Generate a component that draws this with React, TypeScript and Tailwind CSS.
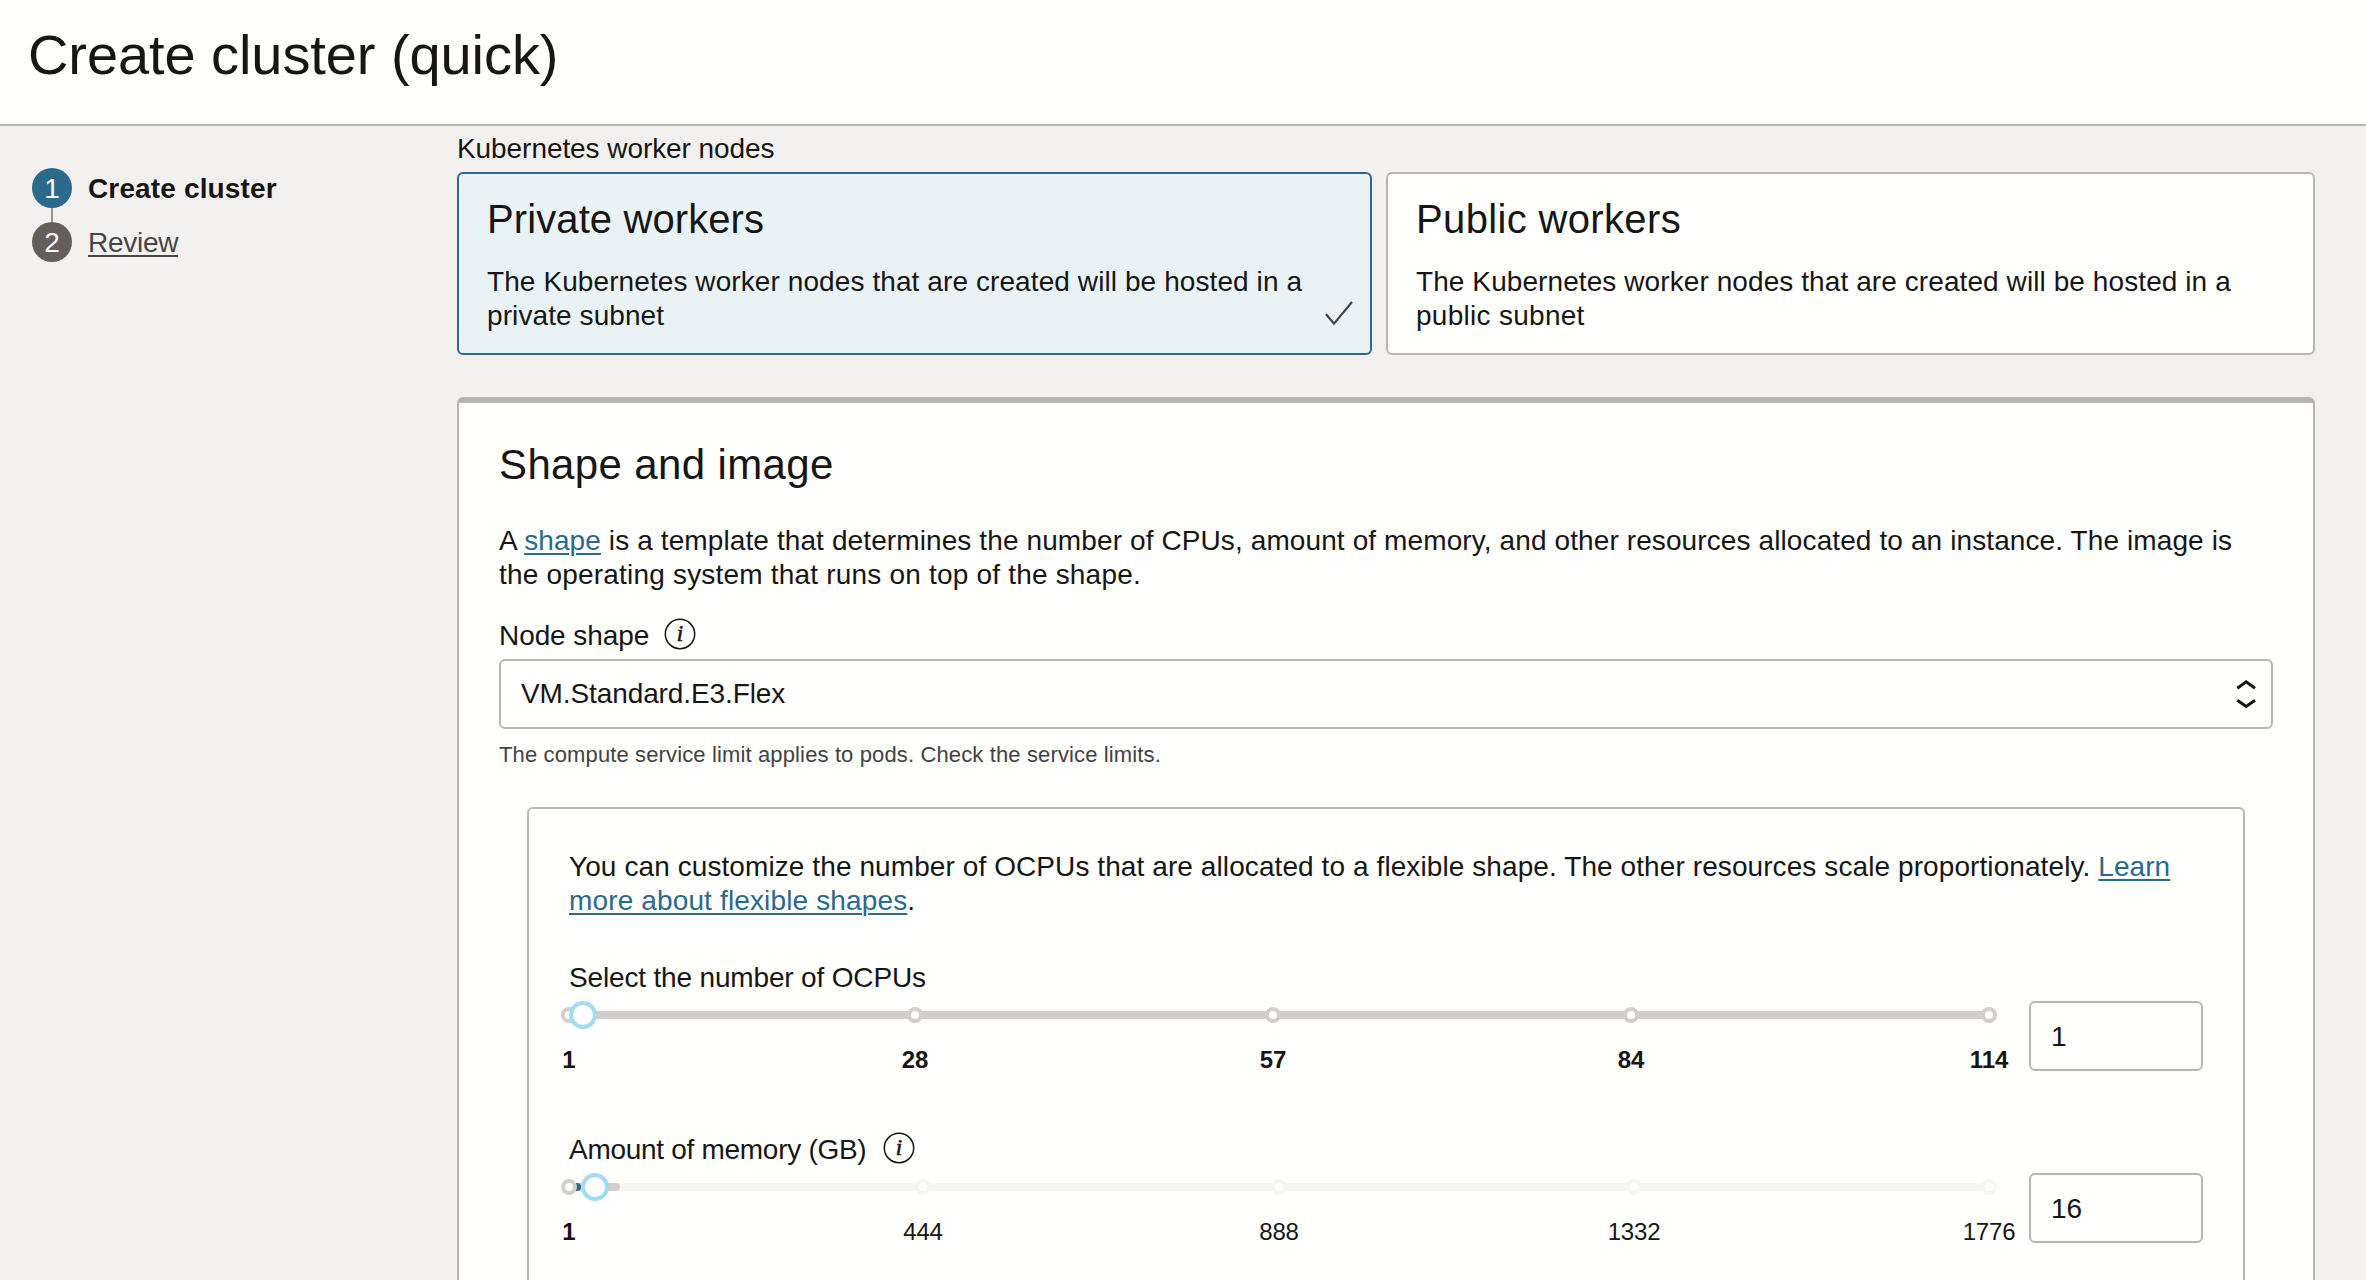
import React from 'react';

type Tick = { at: number; label: string; bold: boolean; muted?: boolean };

type SliderProps = {
  ticks: Tick[];
  thumb: number;
  trackClass: string;
  range?: { available: number; filled: number };
};

const START = 569;
const LENGTH = 1420;
const pct = (x: number) => `${((x - START) / LENGTH) * 100}%`;

const cpuTicks: Tick[] = [
  { at: 569, label: '1', bold: true },
  { at: 915, label: '28', bold: true },
  { at: 1273, label: '57', bold: true },
  { at: 1631, label: '84', bold: true },
  { at: 1989, label: '114', bold: true },
];

const memoryTicks: Tick[] = [
  { at: 569, label: '1', bold: true },
  { at: 923, label: '444', bold: false, muted: true },
  { at: 1279, label: '888', bold: false, muted: true },
  { at: 1634, label: '1332', bold: false, muted: true },
  { at: 1989, label: '1776', bold: false, muted: true },
];

function InfoIcon() {
  return (
    <svg className="-mt-px h-8 w-8 shrink-0" viewBox="0 0 32 32" fill="none">
      <circle cx="16" cy="16" r="14.7" stroke="#171614" strokeWidth="1.5" />
      <text
        x="16"
        y="22.7"
        textAnchor="middle"
        fontFamily='"Liberation Serif", serif'
        fontStyle="italic"
        fontSize="23"
        fill="#171614"
        stroke="#171614"
        strokeWidth="0.6"
      >
        i
      </text>
    </svg>
  );
}

function Slider({ ticks, thumb, trackClass, range }: SliderProps) {
  return (
    <div className="h-[70px] w-[1420px] shrink-0 pt-[10px]">
      <div className={`relative h-2 ${trackClass}`}>
        {range && (
          <>
            <div
              className="absolute inset-y-0 left-0 rounded-r-full bg-[#d2cec9]"
              style={{ width: pct(range.available) }}
            />
            <div
              className="absolute inset-y-0 left-0 rounded-r-full bg-[#2c6a8b]"
              style={{ width: pct(range.filled) }}
            />
          </>
        )}
        {ticks.map((t) => (
          <div
            key={t.label}
            className={`absolute -top-1 h-4 w-4 -translate-x-1/2 rounded-full border-4 bg-[#fefefc] ${
              t.muted ? 'border-[#f7f6f5]' : 'border-[#d2cec9]'
            }`}
            style={{ left: pct(t.at) }}
          />
        ))}
        <div
          className="absolute -top-[10px] h-7 w-7 -translate-x-1/2 rounded-full border-4 border-[#a4daf7] bg-white"
          style={{ left: pct(thumb) }}
        />
      </div>
      <div className="relative mt-[27px] h-7 text-[24px] leading-[28px]">
        {ticks.map((t) => (
          <span
            key={t.label}
            className={`absolute top-0 -translate-x-1/2 ${t.bold ? 'font-bold' : 'tracking-[-0.2px]'}`}
            style={{ left: pct(t.at) }}
          >
            {t.label}
          </span>
        ))}
      </div>
    </div>
  );
}

function NumberBox({ value }: { value: string }) {
  return (
    <div className="ml-[40px] h-[70px] w-[174px] shrink-0 rounded-[6px] border-2 border-[#bbb5b0] pl-5 leading-[68px]">
      {value}
    </div>
  );
}

export default function App() {
  return (
    <div className="flex h-[1280px] w-[2366px] flex-col overflow-hidden whitespace-nowrap bg-[#f3f1f0] font-['Liberation_Sans',Arial,sans-serif] text-[28px] leading-[34px] text-[#171614]">
      <header className="h-[126px] shrink-0 border-b-2 border-[#bbb5b0] bg-[#fefefc] pl-7 pt-[23px]">
        <h1 className="text-[56px] leading-[64px] tracking-[-0.082px]">Create cluster (quick)</h1>
      </header>

      <div className="flex min-h-0 flex-1">
        <nav className="w-[457px] shrink-0 pl-8 pt-[42px] leading-[42px]">
          <div className="flex h-10 gap-4">
            <span className="h-10 w-10 rounded-full bg-[#2c6a8b] text-center text-[#fefefc]">1</span>
            <span className="font-bold tracking-[0.141px]">Create cluster</span>
          </div>
          <div className="ml-[19px] h-[14px] w-0.5 bg-[#97928e]" />
          <div className="flex h-10 gap-4">
            <span className="h-10 w-10 rounded-full bg-[#645f5b] text-center text-[#fefefc]">2</span>
            <a className="tracking-[-0.28px] text-[#474543] underline decoration-2 underline-offset-[3px]">Review</a>
          </div>
        </nav>

        <main className="w-[1858px] shrink-0 pt-[6px]">
          <div className="tracking-[-0.067px]">Kubernetes worker nodes</div>

          <div className="mt-[6px] flex h-[183px] gap-[14px]">
            <section className="relative w-[915px] rounded-[6px] border-2 border-[#2c6a8b] bg-[#e9f2f5] pl-[28px] pt-[23px]">
              <h2 className="text-[40px] leading-[44px] tracking-[0.1px]">Private workers</h2>
              <p className="mt-6 tracking-[0.09px]">
                The Kubernetes worker nodes that are created will be hosted in a<br />
                private subnet
              </p>
              <svg className="absolute bottom-[27px] right-[17px] h-[25px] w-[28px]" viewBox="0 0 28 25" fill="none">
                <path d="M1 13.2 9 22.6 27 1" stroke="#444241" strokeWidth="2.2" />
              </svg>
            </section>
            <section className="flex-1 rounded-[6px] border-2 border-[#bbb5b0] bg-[#fefefc] pl-[28px] pt-[23px]">
              <h2 className="text-[40px] leading-[44px] tracking-[0.35px]">Public workers</h2>
              <p className="mt-6 tracking-[0.085px]">
                The Kubernetes worker nodes that are created will be hosted in a<br />
                <span className="tracking-[0.28px]">public subnet</span>
              </p>
            </section>
          </div>

          <section className="mt-[42px] h-[1000px] rounded-[6px] border-2 border-t-[6px] border-[#bbb5b0] bg-[#fefefc] px-10 pt-[38px]">
            <h2 className="text-[42px] leading-[48px] tracking-[0.365px]">Shape and image</h2>
            <p className="mt-[35px] tracking-[0.107px]">
              A{' '}
              <a className="text-[#2c6a8b] underline decoration-2 underline-offset-[3px]">shape</a> is a template that
              determines the number of CPUs, amount of memory, and other resources allocated to an instance. The image is
              <br />
              <span className="tracking-[0.195px]">the operating system that runs on top of the shape.</span>
            </p>

            <div className="mt-[27px] flex h-[34px]">
              <span className="w-[165px] shrink-0 tracking-[-0.082px]">Node shape</span>
              <InfoIcon />
            </div>
            <div className="mt-[6px] flex h-[70px] items-center justify-between rounded-[6px] border-2 border-[#bbb5b0] pl-5 pr-[15px]">
              <span className="leading-[68px] tracking-[-0.1px]">VM.Standard.E3.Flex</span>
              <svg className="h-[30px] w-5" viewBox="0 0 20 30" fill="none" stroke="#171614" strokeWidth="3">
                <path d="M1.3 9.3 10.2 2.8 19 9.3" />
                <path d="M1.3 21.2 10.2 27.5 19 21.2" />
              </svg>
            </div>
            <div className="mt-[13px] text-[22px] leading-[26px] tracking-[0.133px] text-[#444241]">
              The compute service limit applies to pods. Check the service limits.
            </div>

            <div className="mx-7 mt-[39px] h-[600px] rounded-[6px] border-2 border-[#bbb5b0] pl-10 pt-[41px]">
              <p className="tracking-[0.088px]">
                You can customize the number of OCPUs that are allocated to a flexible shape. The other resources scale
                proportionately.{' '}
                <a className="text-[#2c6a8b] underline decoration-2 underline-offset-[3px]">
                  Learn
                  <br />
                  <span className="tracking-[0.14px]">more about flexible shapes</span>
                </a>
                .
              </p>

              <div className="mt-[43px] tracking-[-0.162px]">Select the number of OCPUs</div>
              <div className="mt-[6px] flex">
                <Slider ticks={cpuTicks} thumb={583} trackClass="bg-[#d2cec9]" />
                <NumberBox value="1" />
              </div>

              <div className="mt-[62px] flex h-[34px]">
                <span className="w-[314px] shrink-0 tracking-[-0.289px]">Amount of memory (GB)</span>
                <InfoIcon />
              </div>
              <div className="mt-[6px] flex">
                <Slider
                  ticks={memoryTicks}
                  thumb={595}
                  trackClass="bg-[#f7f6f5]"
                  range={{ available: 620, filled: 581 }}
                />
                <NumberBox value="16" />
              </div>
            </div>
          </section>
        </main>
      </div>
    </div>
  );
}
